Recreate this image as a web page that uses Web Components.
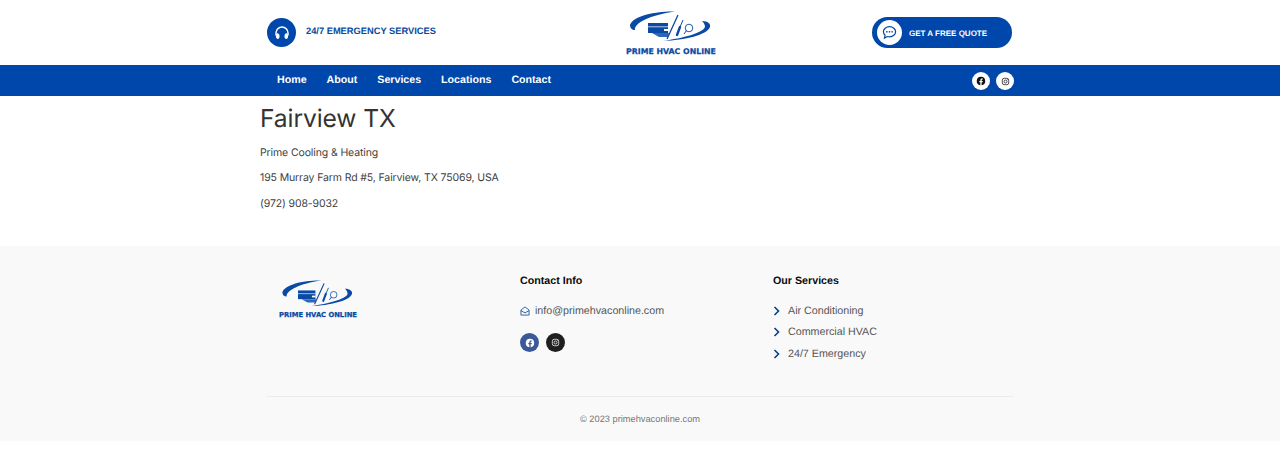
<!DOCTYPE html>
<html lang="en">
<head>
<meta charset="utf-8">
<title>Fairview TX</title>
<style>
  html, body { margin: 0; background: #fff; }
  body { font-family: "Liberation Sans", Arial, sans-serif; text-rendering: geometricPrecision; }
</style>
</head>
<body>
<site-header></site-header>
<site-nav></site-nav>
<location-info></location-info>
<site-footer></site-footer>

<script>
const ICONS = {
    facebook: '<path d="M12 2a10 10 0 0 0-1.6 19.9v-7H7.9V12h2.5V9.8c0-2.5 1.5-3.9 3.8-3.9 1.1 0 2.2.2 2.2.2v2.5h-1.3c-1.2 0-1.6.8-1.6 1.6V12h2.8l-.5 2.9h-2.3v7A10 10 0 0 0 12 2z"/>',
    instagram: '<rect x="3.5" y="3.5" width="17" height="17" rx="5" fill="none" stroke="currentColor" stroke-width="2"/><circle cx="12" cy="12" r="4" fill="none" stroke="currentColor" stroke-width="2"/><circle cx="17" cy="7" r="1.2"/>'
};

class PrimeLogo extends HTMLElement {
    constructor() {
        super();
        this.attachShadow({ mode: 'open' });
    }

    connectedCallback() {
        const scale = parseFloat(this.getAttribute('scale') || '1');
        const gap = parseFloat(this.getAttribute('gap') || '2.5');
        this.shadowRoot.innerHTML = `
            <style>
                :host { display: block; width: ${92 * scale}px; }
                svg { display: block; width: ${92 * scale}px; height: ${33 * scale}px; }
                .name {
                    display: block;
                    margin-top: ${gap}px;
                    font: 700 ${7.8 * scale}px/${9 * scale}px "DejaVu Sans", sans-serif;
                    -webkit-text-stroke: 0.25px #0a4aa5;
                    color: #0a4aa5;
                    text-align: center;
                    white-space: nowrap;
                }
            </style>
            <svg viewBox="0 0 92 33" aria-hidden="true">
                <path d="M50 .5C30 0 8 5 5 14c0 3 2 5 5 5C9 12 25 4 50 .5z" fill="#0a4aa5"/>
                <path d="M77 10c6 0 9 3 8 6-3 8-25 13-47 14 20-3 40-8 42-14 0-2-1-4-3-6z" fill="#0a4aa5"/>
                <rect x="23" y="12" width="20" height="10" fill="#0a4aa5"/>
                <rect x="23" y="15.500" width="20" height=".7" fill="#fff"/>
                <path d="M27 22h17l-1 4H34z" fill="#2c68b8"/>
                <rect x="39" y="18" width="4" height="2" fill="#fff"/>
                <path d="M53 4 42 28" stroke="#0a4aa5" stroke-width="1.300"/>
                <path d="M58 9l-3 7" stroke="#0a4aa5" stroke-width="1"/>
                <path d="M55 16l-3 8" stroke="#0a4aa5" stroke-width="2.400" stroke-linecap="round"/>
                <circle cx="64" cy="17" r="3.800" fill="none" stroke="#0a4aa5" stroke-width=".9"/>
                <path d="M61.500 19.500 59 23" stroke="#0a4aa5" stroke-width="1"/>
            </svg>
            <span class="name">PRIME HVAC ONLINE</span>
        `;
    }
}

class SiteHeader extends HTMLElement {
    constructor() {
        super();
        this.attachShadow({ mode: 'open' });
    }

    connectedCallback() {
        this.shadowRoot.innerHTML = `
            <style>
                :host { display: block; height: 65px; background: #fff; }
                .wrap {
                    width: 760px;
                    height: 65px;
                    margin: 0 auto;
                    display: grid;
                    grid-template-columns: 365px 92px 1fr;
                    align-items: center;
                }
                .emergency { display: flex; align-items: center; gap: 10px; padding-left: 7px; }
                .badge {
                    width: 29px; height: 29px; border-radius: 50%;
                    background: #0047ab; color: #fff;
                    display: flex; align-items: center; justify-content: center;
                }
                .emergency span {
                    font-size: 9.300px; font-weight: 700; color: #0a4a9f;
                    margin-bottom: 3px;
                }
                .logo { margin-top: 11px; align-self: start; }
                .quote {
                    justify-self: end;
                    margin-right: 8px;
                    width: 140px; height: 31px;
                    box-sizing: border-box;
                    padding-left: 5px;
                    border-radius: 16px;
                    background: #0047ab;
                    display: flex; align-items: center; gap: 7px;
                    color: #fff;
                    font-size: 8px; font-weight: 700;
                }
                .quote span { padding-top: 1px; }
                .bubble {
                    width: 25px; height: 25px; border-radius: 50%;
                    background: #fff; color: #0047ab;
                    display: flex; align-items: center; justify-content: center;
                }
            </style>
            <div class="wrap">
                <div class="emergency">
                    <div class="badge">
                        <svg width="16" height="16" viewBox="0 0 16 16" fill="none" stroke="#fff" stroke-width="1.500" stroke-linecap="round">
                            <path d="M2 10V8a6 6 0 0 1 12 0v2"/>
                            <rect x="2.500" y="9" width="2.500" height="4.500" rx="1.200" fill="#fff" stroke-width="1"/>
                            <rect x="11" y="9" width="2.500" height="4.500" rx="1.200" fill="#fff" stroke-width="1"/>
                        </svg>
                    </div>
                    <span>24/7 EMERGENCY SERVICES</span>
                </div>
                <prime-logo class="logo"></prime-logo>
                <div class="quote">
                    <div class="bubble">
                        <svg width="15" height="15" viewBox="0 0 16 16" fill="none" stroke="currentColor" stroke-width="1.300">
                            <path d="M8 1.800c3.700 0 6.500 2.400 6.500 5.400s-2.800 5.400-6.500 5.400c-.8 0-1.500-.1-2.200-.3L2.600 14l.7-3C2.200 10 1.500 8.700 1.500 7.200c0-3 2.800-5.400 6.500-5.400z"/>
                            <circle cx="5.200" cy="7.200" r=".9" fill="currentColor" stroke="none"/>
                            <circle cx="8" cy="7.200" r=".9" fill="currentColor" stroke="none"/>
                            <circle cx="10.800" cy="7.200" r=".9" fill="currentColor" stroke="none"/>
                        </svg>
                    </div>
                    <span>GET A FREE QUOTE</span>
                </div>
            </div>
        `;
    }
}

class SiteNav extends HTMLElement {
    constructor() {
        super();
        this.attachShadow({ mode: 'open' });
    }

    connectedCallback() {
        const links = ['Home', 'About', 'Services', 'Locations', 'Contact'];
        this.shadowRoot.innerHTML = `
            <style>
                :host { display: block; height: 31px; background: #0047ab; }
                .wrap {
                    width: 760px; height: 31px; margin: 0 auto;
                    display: flex; align-items: center; justify-content: space-between;
                }
                nav { display: flex; gap: 20px; padding-left: 17px; padding-bottom: 1px; }
                a { color: #fff; font-size: 10.650px; font-weight: 700; text-decoration: none; }
                .social { display: flex; gap: 6px; padding-right: 6px; padding-top: 1px; }
                .social span {
                    width: 18px; height: 18px; border-radius: 50%;
                    background: #fff; color: #111;
                    display: flex; align-items: center; justify-content: center;
                }
            </style>
            <div class="wrap">
                <nav>${links.map(l => `<a href="#">${l}</a>`).join('')}</nav>
                <div class="social">
                    <span><svg width="10" height="10" viewBox="0 0 24 24" fill="currentColor">${ICONS.facebook}</svg></span>
                    <span><svg width="9" height="9" viewBox="0 0 24 24" fill="currentColor">${ICONS.instagram}</svg></span>
                </div>
            </div>
        `;
    }
}

class LocationInfo extends HTMLElement {
    constructor() {
        super();
        this.attachShadow({ mode: 'open' });
    }

    connectedCallback() {
        this.shadowRoot.innerHTML = `
            <style>
                :host { display: block; height: 150px; background: #fff; font-family: Inter, sans-serif; color: #333; }
                .wrap { width: 760px; margin: 0 auto; }
                h1 { margin: 0; padding-top: 5px; font-size: 24.600px; line-height: 34px; font-weight: 400; letter-spacing: -0.1px; }
                p { margin: 0 0 7.400px; font-size: 10.500px; line-height: 18px; letter-spacing: -0.12px; color: #3f3f3f; }
                h1 + p { margin-top: 9px; }
            </style>
            <div class="wrap">
                <h1>Fairview TX</h1>
                <p>Prime Cooling &amp; Heating</p>
                <p>195 Murray Farm Rd #5, Fairview, TX 75069, USA</p>
                <p>(972) 908-9032</p>
            </div>
        `;
    }
}

class SiteFooter extends HTMLElement {
    constructor() {
        super();
        this.attachShadow({ mode: 'open' });
    }

    connectedCallback() {
        const services = ['Air Conditioning', 'Commercial HVAC', '24/7 Emergency'];
        this.shadowRoot.innerHTML = `
            <style>
                :host { display: block; height: 195px; background: #f9f9f9; }
                .wrap { width: 746px; height: 195px; margin: 0 auto; display: flex; flex-direction: column; }
                .cols {
                    height: 151px;
                    box-sizing: border-box;
                    border-bottom: 1px solid #ececec;
                    display: grid;
                    grid-template-columns: 253px 253px 1fr;
                    padding-top: 28px;
                }
                .brand { padding: 6px 0 0 11px; }
                h3 { margin: 0 0 12px; font-size: 10.700px; line-height: 14px; font-weight: 700; color: #0b0b0b; }
                .row {
                    display: flex; align-items: center; gap: 5px;
                    height: 21.500px;
                    font-size: 10.700px; color: #555;
                }
                .social { display: flex; gap: 7px; margin-top: 11.700px; }
                .social span {
                    width: 19px; height: 19px; border-radius: 50%;
                    display: flex; align-items: center; justify-content: center;
                    color: #fff;
                }
                .fb { background: #3b5998; }
                .ig { background: #1f1f1f; }
                .copy { text-align: center; font-size: 9.270px; line-height: 44px; color: #777; }
            </style>
            <div class="wrap">
                <div class="cols">
                    <div class="brand"><prime-logo scale="0.87" gap="3.5"></prime-logo></div>
                    <div>
                        <h3>Contact Info</h3>
                        <div class="row">
                            <svg width="10" height="10" viewBox="0 0 16 16" fill="none" stroke="#2f5d9e" stroke-width="1.500" stroke-linejoin="round">
                                <path d="M1.500 6.500 8 1.500l6.500 5v8h-13z"/>
                                <path d="M1.500 7.500 8 11l6.500-3.500"/>
                            </svg>
                            <span>info@primehvaconline.com</span>
                        </div>
                        <div class="social">
                            <span class="fb"><svg width="10" height="10" viewBox="0 0 24 24" fill="currentColor">${ICONS.facebook}</svg></span>
                            <span class="ig"><svg width="9" height="9" viewBox="0 0 24 24" fill="currentColor">${ICONS.instagram}</svg></span>
                        </div>
                    </div>
                    <div>
                        <h3>Our Services</h3>
                        ${services.map(s => `
                        <div class="row">
                            <svg width="10" height="10" viewBox="0 0 10 10" fill="none" stroke="#0a3f86" stroke-width="1.600">
                                <path d="M1.500 1l4 4-4 4"/>
                            </svg>
                            <span>${s}</span>
                        </div>`).join('')}
                    </div>
                </div>
                <div class="copy">© 2023 primehvaconline.com</div>
            </div>
        `;
    }
}

customElements.define('prime-logo', PrimeLogo);
customElements.define('site-header', SiteHeader);
customElements.define('site-nav', SiteNav);
customElements.define('location-info', LocationInfo);
customElements.define('site-footer', SiteFooter);
</script>
</body>
</html>
